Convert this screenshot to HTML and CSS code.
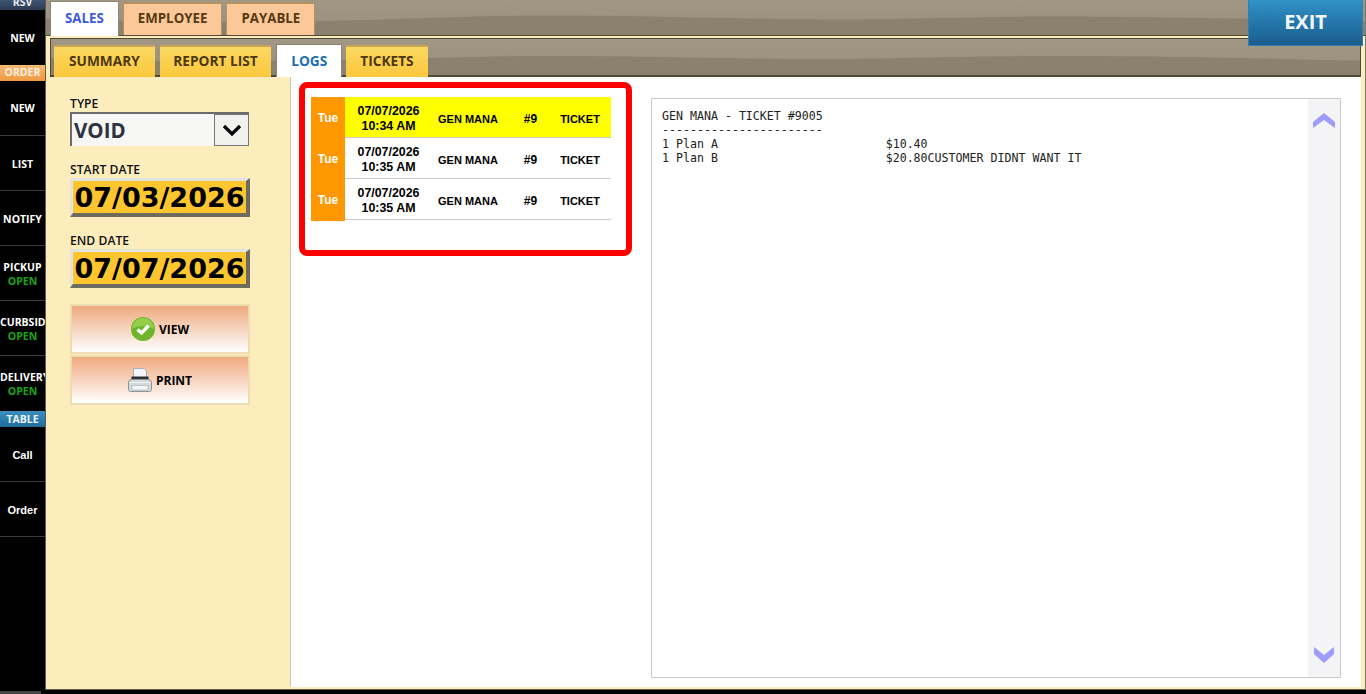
FILE: index.html
```html
<!DOCTYPE html>
<html lang="en">
<head>
    <meta charset="UTF-8">
    <title>Reports - Logs</title>
    <link rel="stylesheet" href="styles.css">
</head>
<body>

<div class="app">
    <div class="sidebar">
        <div class="side-head head-rsv">RSV</div>
        <div class="side-item no-line">NEW</div>
        <div class="side-head head-order">ORDER</div>
        <div class="side-item tight">NEW</div>
        <div class="side-item">LIST</div>
        <div class="side-item">NOTIFY</div>
        <div class="side-item">PICKUP<span class="open">OPEN</span></div>
        <div class="side-item">CURBSIDE<span class="open">OPEN</span></div>
        <div class="side-item no-line">DELIVERY<span class="open">OPEN</span></div>
        <div class="side-head head-table">TABLE</div>
        <div class="side-item plain">Call</div>
        <div class="side-item plain">Order</div>
        <div class="side-foot"></div>
    </div>

    <div class="main">
        <div class="top-tabs wavy">
            <svg class="wave" viewBox="0 0 1320 36" preserveAspectRatio="none"><path d="M0 19C90 24 200 22 264 22C340 21 420 16 500 16C620 16 700 20 800 20C860 20 920 17 1000 17C1080 17 1160 18 1320 22V36H0Z" fill="#8a816e"/></svg>
            <div class="tab active">SALES</div>
            <div class="tab">EMPLOYEE</div>
            <div class="tab">PAYABLE</div>
        </div>
        <button class="exit-btn">EXIT</button>

        <div class="panel">
            <div class="sub-tabs wavy">
                <svg class="wave" viewBox="0 0 1310 38" preserveAspectRatio="none"><path d="M0 20C90 25 200 23 264 23C340 22 420 18 500 18C620 18 700 22 800 21C860 20 920 18 1000 18C1080 18 1160 19 1310 23V38H0Z" fill="#8a816e"/></svg>
                <div class="subtab wide">SUMMARY</div>
                <div class="subtab narrow">REPORT LIST</div>
                <div class="subtab active">LOGS</div>
                <div class="subtab">TICKETS</div>
            </div>

            <div class="content">
                <div class="filters">
                    <label class="field-label">TYPE</label>
                    <div class="select-box">
                        <span>VOID</span>
                        <div class="select-arrow">
                            <svg width="20" height="13" viewBox="0 0 20 13"><path d="M2 2L10 10L18 2" fill="none" stroke="#000" stroke-width="3.2"/></svg>
                        </div>
                    </div>
                    <label class="field-label spaced">START DATE</label>
                    <div class="date-box">07/03/2026</div>
                    <label class="field-label spaced">END DATE</label>
                    <div class="date-box">07/07/2026</div>

                    <div class="action-btn first">
                        <svg width="24" height="24" viewBox="0 0 24 24">
                            <circle cx="12" cy="12" r="12" fill="#6fb52c"/>
                            <path d="M1 12A11 11 0 0 1 23 12C17 8 7 8 1 12Z" fill="#93cd4a"/>
                            <path d="M6.5 12.5L10.500 16L17.500 8.800" fill="none" stroke="#fff" stroke-width="3.400"/>
                        </svg>
                        VIEW
                    </div>
                    <div class="action-btn">
                        <svg width="24" height="24" viewBox="0 0 24 24">
                            <path d="M5.500 .5H16L18.500 3V10H5.500Z" fill="#f2f5f9" stroke="#a9b2bc"/>
                            <rect x="3.500" y="8.500" width="17" height="3.500" fill="#2c3034"/>
                            <path d="M3 11.500H21Q23.500 12 23.500 15V21.500Q23.500 23.500 21.500 23.500H2.500Q.5 23.500 .5 21.500V15Q.5 12 3 11.500Z" fill="#d3d8db" stroke="#8d959b"/>
                            <path d="M1.500 14.500H22.500" stroke="#f0f2f4"/>
                            <rect x="4" y="17.500" width="16" height="4.500" fill="#f4f6f7" stroke="#a5acb1" stroke-width=".6"/>
                        </svg>
                        PRINT
                    </div>
                </div>

                <div class="logs">
                    <div class="logs-box">
                        <div class="log-row current">
                            <div class="day">Tue</div>
                            <div class="when">07/07/2026<br>10:34 AM</div>
                            <div class="small">GEN MANA</div>
                            <div>#9</div>
                            <div class="small">TICKET</div>
                        </div>
                        <div class="log-row">
                            <div class="day">Tue</div>
                            <div class="when">07/07/2026<br>10:35 AM</div>
                            <div class="small">GEN MANA</div>
                            <div>#9</div>
                            <div class="small">TICKET</div>
                        </div>
                        <div class="log-row">
                            <div class="day">Tue</div>
                            <div class="when">07/07/2026<br>10:35 AM</div>
                            <div class="small">GEN MANA</div>
                            <div>#9</div>
                            <div class="small">TICKET</div>
                        </div>
                    </div>
                </div>

                <div class="receipt-wrap">
                    <div class="receipt">
                        <pre class="receipt-text">GEN MANA - TICKET #9005
-----------------------
1 Plan A                        $10.40
1 Plan B                        $20.80CUSTOMER DIDNT WANT IT</pre>
                        <div class="scroller">
                            <svg width="22" height="16" viewBox="0 0 22 16"><path d="M0 9L11 0L22 9V15L11 7L0 15Z" fill="#9c9cff"/></svg>
                            <svg width="22" height="16" viewBox="0 0 22 16"><path d="M1 0L11 8L21 0V7L11 16L1 7Z" fill="#9c9cff"/></svg>
                        </div>
                    </div>
                </div>
            </div>
        </div>
    </div>
</div>

</body>
</html>
```

FILE: styles.css
```css
* {
    box-sizing: border-box;
}
html, body {
    margin: 0;
    height: 100%;
    overflow: hidden;
    background: #000;
}
.app {
    display: flex;
    height: 694px;
    font-family: "Open Sans", sans-serif;
}

/* left black menu */
.sidebar {
    width: 45px;
    flex-shrink: 0;
    height: 694px;
    display: flex;
    flex-direction: column;
    background: #000;
    color: #fff;
}
.side-head {
    text-align: center;
    font-size: 10.5px;
    font-weight: 700;
    line-height: 15px;
    height: 16px;
    flex-shrink: 0;
    overflow: hidden;
}
.head-rsv {
    height: 10px;
    line-height: 5px;
    background: linear-gradient(#3e5575, #2c3a52);
    color: #e8e8e8;
}
.head-order {
    background: linear-gradient(#f5b976, #ef9a3f);
    color: #fbeede;
}
.head-table {
    line-height: 17px;
    background: linear-gradient(#3a8fbe, #226d9c);
    color: #eef6fb;
}
.side-item {
    height: 55px;
    flex-shrink: 0;
    padding-top: 2px;
    display: flex;
    flex-direction: column;
    justify-content: center;
    text-align: center;
    font-size: 10.5px;
    font-weight: 700;
    line-height: 14px;
    white-space: nowrap;
    overflow: hidden;
    border-bottom: 1px solid #3a3a3a;
}
.side-item.no-line {
    padding-top: 0;
    border-bottom: 0;
}
.side-item.tight {
    padding-top: 0;
}
.side-item.plain {
    font-family: "Liberation Sans", sans-serif;
    font-size: 11px;
}
.open {
    color: #17a817;
}
.side-foot {
    width: 41px;
    height: 3px;
    margin-top: auto;
    background: #444;
}

/* main area */
.main {
    flex: 1;
    position: relative;
    height: 690px;
    background: #fdedbd;
    border-left: 1px solid #5f5a4c;
    border-right: 1px solid #7c7564;
    border-bottom: 1px solid #5f5a4c;
    display: flex;
    flex-direction: column;
}
.wavy {
    position: relative;
    background: linear-gradient(#a09784, #988f7c);
}
.wave {
    position: absolute;
    left: 0;
    top: 0;
    width: 100%;
    height: 100%;
}
.top-tabs {
    height: 36px;
    display: flex;
    align-items: flex-end;
    gap: 4px;
    padding-left: 4px;
    border-bottom: 1px solid #50493a;
    flex-shrink: 0;
}
.tab {
    position: relative;
    height: 33px;
    padding: 0 14px;
    font-size: 13.3px;
    font-weight: 700;
    line-height: 28px;
    color: #553a14;
    background: #fcc799;
    border-top: 2px solid #b3925f;
    border-left: 1px solid #b3925f;
    border-right: 1px solid #b3925f;
}
.tab.active {
    height: 35px;
    margin-bottom: -1px;
    color: #3c5bd8;
    background: #fff;
    border: 1px solid #8d8674;
    border-bottom: 0;
    line-height: 32px;
}
.exit-btn {
    position: absolute;
    left: 1202px;
    top: -1px;
    width: 115px;
    height: 47px;
    z-index: 2;
    padding: 0 0 2px;
    border: 1px solid #2e82b2;
    background: linear-gradient(#2f92c8, #1b5c8c);
    color: #f2f7fa;
    font-family: "Open Sans", sans-serif;
    font-size: 20px;
    font-weight: 700;
}
.panel {
    margin: 2px 4px 2px 4px;
    flex: 1;
    display: flex;
    flex-direction: column;
}
.sub-tabs {
    height: 39px;
    display: flex;
    align-items: flex-end;
    gap: 5px;
    padding-left: 3px;
    border: 1px solid #50493a;
    border-bottom: 2px solid #50493a;
    flex-shrink: 0;
}
.subtab {
    position: relative;
    height: 32px;
    padding: 0 14px;
    font-size: 13.7px;
    font-weight: 700;
    line-height: 28px;
    color: #4d3810;
    background: linear-gradient(#f9d862, #fdc73c);
    border-top: 2px solid #c9a55a;
    margin-bottom: -2px;
}
.subtab.wide {
    padding: 0 15px;
}
.subtab.narrow {
    padding: 0 13.5px;
}
.subtab.active {
    height: 33px;
    margin-right: -1px;
    padding: 0 14px;
    color: #1a6db6;
    background: #fff;
    border: 1px solid #8d8674;
    border-bottom: 0;
    line-height: 32px;
}
.content {
    flex: 1;
    display: flex;
    margin-left: -4px;
}

/* filter column */
.filters {
    width: 245px;
    flex-shrink: 0;
    padding: 20px 40px 0 24px;
    border-right: 1px solid #cfc7b0;
}
.field-label {
    display: block;
    margin-bottom: 1px;
    font-size: 12.2px;
    font-weight: 600;
    line-height: 14px;
    color: #111;
}
.field-label.spaced {
    margin-top: 17px;
}
.select-box {
    width: 179px;
    height: 34px;
    margin-top: 1px;
    display: flex;
    justify-content: space-between;
    padding-left: 2px;
    background: #f6f6f4;
    border-top: 2px solid #6c6c6c;
    border-left: 2px solid #6c6c6c;
    font-size: 20.5px;
    font-weight: 700;
    line-height: 33px;
    color: #2d3340;
}
.select-arrow {
    width: 35px;
    height: 32px;
    display: flex;
    align-items: center;
    justify-content: center;
    background: #f1f1ef;
    border: 1px solid #77777a;
}
.date-box {
    width: 180px;
    height: 39px;
    background: #fec62e;
    border-top: 3px solid #e3e3df;
    border-left: 3px solid #e3e3df;
    border-right: 4px solid #6d6a5e;
    border-bottom: 4px solid #6d6a5e;
    font-family: "DejaVu Sans", sans-serif;
    font-size: 27px;
    font-weight: 700;
    line-height: 34px;
    text-align: center;
    white-space: nowrap;
    color: #000;
}
.action-btn {
    width: 180px;
    height: 50px;
    margin-top: 1px;
    display: flex;
    align-items: center;
    justify-content: center;
    gap: 4px;
    background: linear-gradient(#efa97f, #fff);
    border: 2px solid #eeddb2;
    font-size: 12px;
    font-weight: 700;
    color: #000;
}
.action-btn.first {
    margin-top: 16px;
}

/* logs table */
.logs {
    width: 360px;
    flex-shrink: 0;
    background: #fff;
    padding: 5px 0 0 8px;
}
.logs-box {
    width: 333px;
    height: 174px;
    border: 6px solid #f00;
    border-radius: 8px;
    padding: 9px 0 0 6px;
}
.log-row {
    width: 300px;
    height: 41px;
    display: grid;
    grid-template-columns: 34px 87px 72px 53px 46px 8px;
    align-items: center;
    text-align: center;
    font-family: "Liberation Sans", sans-serif;
    font-size: 12px;
    font-weight: 700;
    line-height: 15px;
    color: #000;
    border-bottom: 1px solid #ccc;
    white-space: nowrap;
}
.log-row div {
    margin-top: 2px;
}
.log-row.current {
    background: #ff0;
}
.log-row .when {
    font-size: 12.4px;
}
.log-row .small {
    font-size: 11px;
}
.log-row .day {
    margin-top: 0;
    align-self: stretch;
    line-height: 42px;
    color: #fff;
    background: #ff9800;
}

/* receipt */
.receipt-wrap {
    flex: 1;
    background: #fff;
    padding: 21px 20px 9px 0;
}
.receipt {
    height: 100%;
    display: flex;
    justify-content: space-between;
    border: 1px solid #ccc;
}
.receipt-text {
    margin: 0;
    padding: 10px 0 0 10px;
    font-family: "DejaVu Sans Mono", monospace;
    font-size: 11.62px;
    line-height: 14px;
    color: #222;
}
.scroller {
    width: 32px;
    display: flex;
    flex-direction: column;
    justify-content: space-between;
    align-items: center;
    padding: 14px 0;
    background: #f4f4f6;
}
```
